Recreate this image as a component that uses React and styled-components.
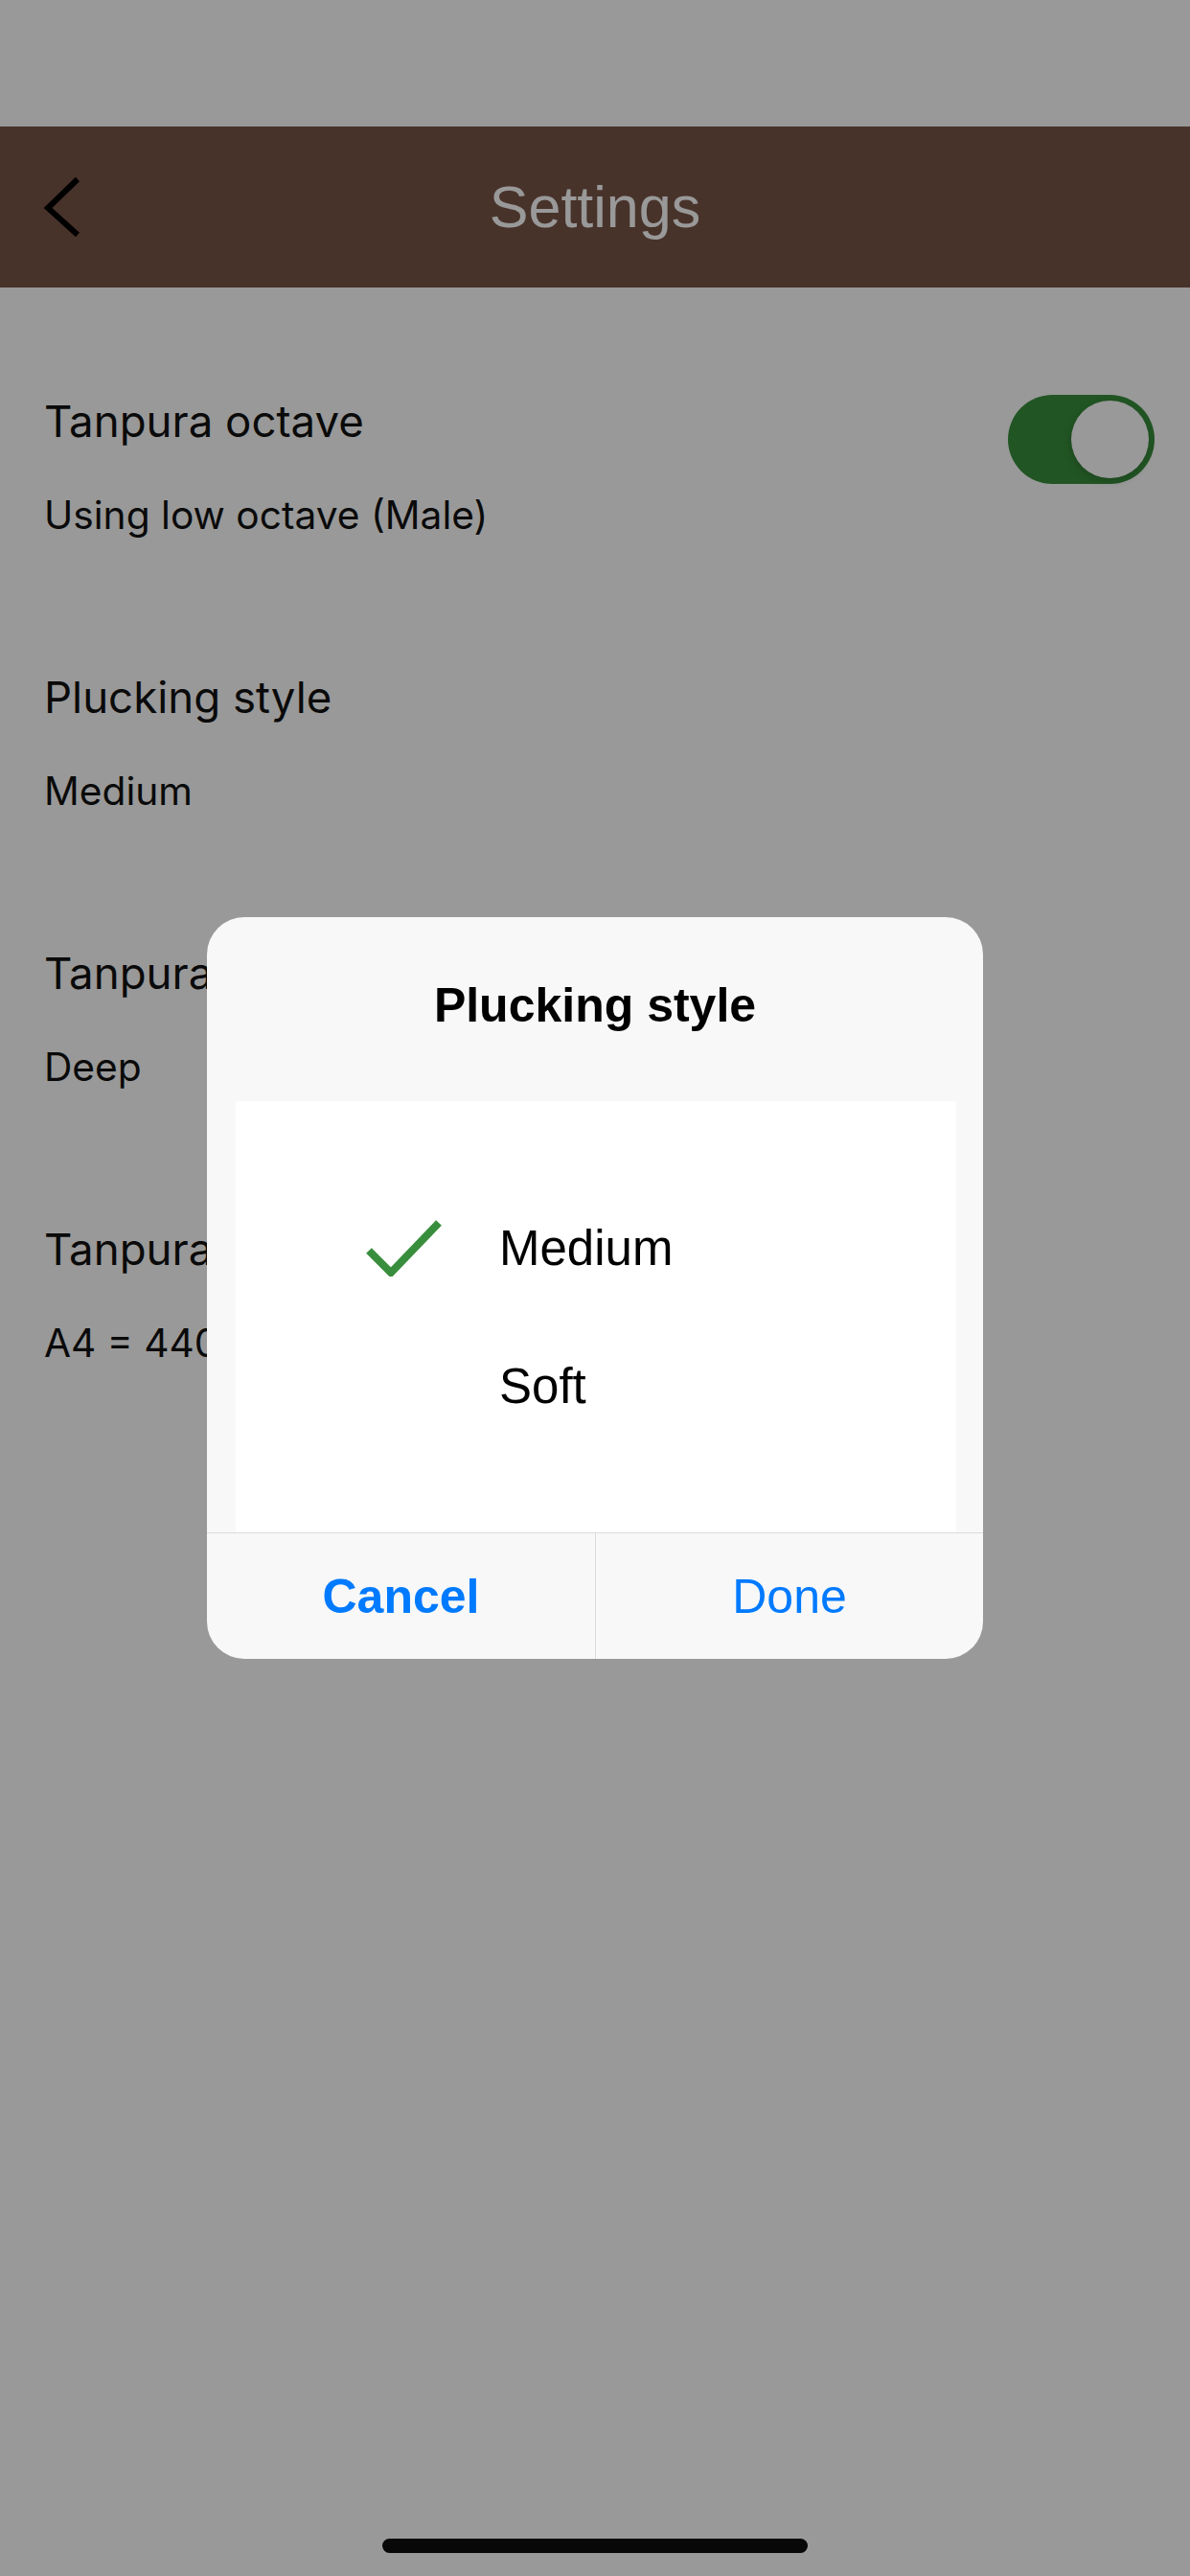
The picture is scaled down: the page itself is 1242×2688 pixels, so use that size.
import React from "react";
import styled, { createGlobalStyle } from "styled-components";

const GlobalStyle = createGlobalStyle`
    * {
        box-sizing: border-box;
    }
    html,
    body {
        margin: 0;
        padding: 0;
        background: #ffffff;
    }
    body {
        font-family: Inter, "Noto Sans", sans-serif;
    }
`;

const Screen = styled.div`
    position: relative;
    width: 1242px;
    min-height: 2688px;
    background: #ffffff;
`;

const StatusBar = styled.div`
    height: 132px;
    background: #ffffff;
`;

const Header = styled.header`
    display: grid;
    grid-template-columns: 1fr auto 1fr;
    align-items: center;
    height: 168px;
    background: #795548;
`;

const BackButton = styled.button`
    justify-self: start;
    display: flex;
    align-items: center;
    margin-left: 44px;
    padding: 0;
    border: none;
    background: transparent;
    cursor: pointer;

    svg {
        display: block;
    }
`;

const HeaderTitle = styled.h1`
    margin: 0;
    font-family: "Liberation Sans", Arial, sans-serif;
    font-size: 61px;
    font-weight: 400;
    line-height: 1;
    color: #ffffff;
`;

const Content = styled.main`
    padding: 112px 37px 0 46px;
`;

const Section = styled.section`
    display: flex;
    justify-content: space-between;
    align-items: flex-start;
    margin-bottom: 137px;
`;

const TextBlock = styled.div`
    display: flex;
    flex-direction: column;
`;

const ItemTitle = styled.div`
    font-size: 45.6px;
    line-height: 56px;
    color: #111111;
`;

const ItemValue = styled.div`
    margin-top: 45px;
    font-size: 40.7px;
    line-height: 50px;
    color: #111111;
`;

const Switch = styled.div`
    display: flex;
    justify-content: ${({ $on }) => ($on ? "flex-end" : "flex-start")};
    width: 153px;
    height: 93px;
    padding: 6px;
    border-radius: 47px;
    background: ${({ $on }) => ($on ? "#388e3c" : "#e5e5ea")};
`;

const Knob = styled.span`
    width: 81px;
    height: 81px;
    border-radius: 50%;
    background: #ffffff;
    box-shadow: -1px 3px 8px rgba(0, 0, 0, 0.18);
`;

const Overlay = styled.div`
    position: fixed;
    inset: 0;
    display: flex;
    align-items: center;
    justify-content: center;
    background: rgba(0, 0, 0, 0.4);
`;

const Dialog = styled.div`
    display: flex;
    flex-direction: column;
    width: 810px;
    border-radius: 39px;
    overflow: hidden;
    background: #f8f8f8;
    font-family: "Liberation Sans", Arial, sans-serif;
`;

const DialogTitle = styled.h2`
    margin: 0;
    padding: 63px 0 71px;
    font-size: 50px;
    font-weight: 700;
    line-height: 58px;
    text-align: center;
    color: #000000;
`;

const Picker = styled.div`
    display: flex;
    flex-direction: column;
    justify-content: center;
    height: 450px;
    margin: 0 28px 0 30px;
    background: #ffffff;
`;

const Option = styled.div`
    display: flex;
    align-items: center;
    height: 144px;
    padding-left: 135px;
`;

const CheckSlot = styled.div`
    width: 80px;
    height: 60px;
    margin-right: 60px;

    svg {
        display: block;
    }
`;

const OptionLabel = styled.span`
    font-size: 51px;
    line-height: 1;
    color: #000000;
`;

const ButtonRow = styled.div`
    display: grid;
    grid-template-columns: 1fr 1fr;
    height: 132px;
    border-top: 1px solid #dcdcdc;
`;

const DialogButton = styled.button`
    border: none;
    border-left: ${({ $divider }) => ($divider ? "1px solid #dcdcdc" : "none")};
    background: transparent;
    font-family: "Liberation Sans", Arial, sans-serif;
    font-size: 50px;
    font-weight: ${({ $bold }) => ($bold ? 700 : 400)};
    color: #007aff;
    cursor: pointer;
`;

const HomeIndicator = styled.div`
    position: fixed;
    left: 50%;
    bottom: 24px;
    width: 444px;
    height: 15px;
    margin-left: -222px;
    border-radius: 8px;
    background: #080808;
`;

const settings = [
    { title: "Tanpura octave", value: "Using low octave (Male)", toggle: true },
    { title: "Plucking style", value: "Medium" },
    { title: "Tanpura sound", value: "Deep" },
    { title: "Tanpura pitch", value: "A4 = 440 Hz" },
];

const options = ["Medium", "Soft"];

function Chevron() {
    return (
        <svg width="42" height="64" viewBox="0 0 42 64">
            <polyline
                points="37,3 6,33 37,61"
                fill="none"
                stroke="#000"
                strokeWidth="6"
            />
        </svg>
    );
}

function Check() {
    return (
        <svg width="80" height="60" viewBox="0 0 80 60">
            <polyline
                points="4,33 27,56 77,4"
                fill="none"
                stroke="#388e3c"
                strokeWidth="8"
            />
        </svg>
    );
}

function App() {
    const selected = "Medium";

    return (
        <>
            <GlobalStyle />
            <Screen>
                <StatusBar />
                <Header>
                    <BackButton aria-label="Back">
                        <Chevron />
                    </BackButton>
                    <HeaderTitle>Settings</HeaderTitle>
                    <div />
                </Header>
                <Content>
                    {settings.map((item) => (
                        <Section key={item.title}>
                            <TextBlock>
                                <ItemTitle>{item.title}</ItemTitle>
                                <ItemValue>{item.value}</ItemValue>
                            </TextBlock>
                            {item.toggle && (
                                <Switch $on>
                                    <Knob />
                                </Switch>
                            )}
                        </Section>
                    ))}
                </Content>
                <Overlay>
                    <Dialog>
                        <DialogTitle>Plucking style</DialogTitle>
                        <Picker>
                            {options.map((opt) => (
                                <Option key={opt}>
                                    <CheckSlot>{opt === selected && <Check />}</CheckSlot>
                                    <OptionLabel>{opt}</OptionLabel>
                                </Option>
                            ))}
                        </Picker>
                        <ButtonRow>
                            <DialogButton $bold>Cancel</DialogButton>
                            <DialogButton $divider>Done</DialogButton>
                        </ButtonRow>
                    </Dialog>
                </Overlay>
                <HomeIndicator />
            </Screen>
        </>
    );
}

export default App;
